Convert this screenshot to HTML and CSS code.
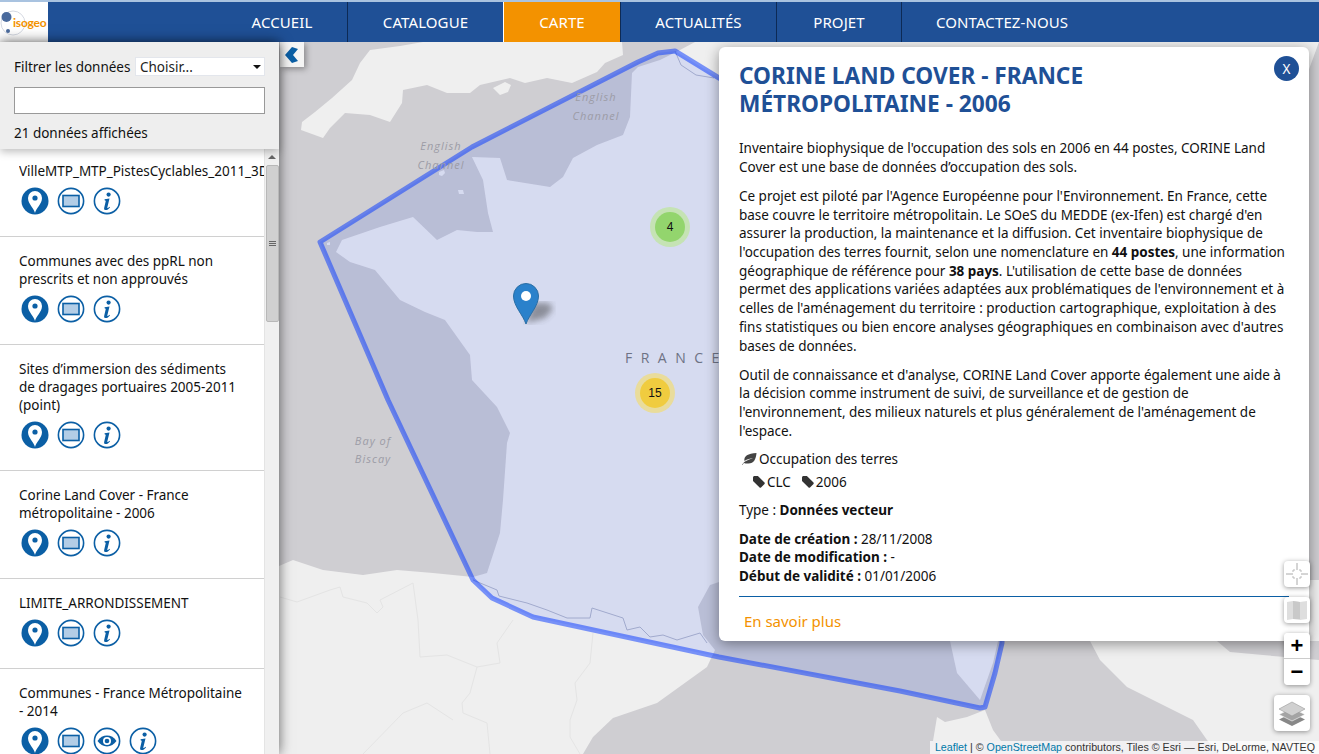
FILE: index.html
```html
<!DOCTYPE html>
<html lang="fr">
<head>
  <meta charset="UTF-8">
  <meta name="viewport" content="width=device-width, initial-scale=1.0">
  <title>Carte</title>
  <link rel="stylesheet" href="styles.css">
</head>
<body>
  <svg class="sprites" width="0" height="0">
    <symbol id="i-pin" viewBox="0 0 28 28">
      <circle cx="14" cy="14" r="13.5" fill="#0b5fa5"/>
      <path d="M14 26c-1-5-7-9-7-15a7 7 0 0 1 14 0c0 6-6 10-7 15z" fill="#fff"/>
      <circle cx="14" cy="11" r="2.6" fill="#0b5fa5"/>
    </symbol>
    <symbol id="i-rect" viewBox="0 0 28 28">
      <circle cx="14" cy="14" r="12.6" fill="#fff" stroke="#0b5fa5" stroke-width="1.6"/>
      <rect x="6" y="8.5" width="16" height="11" fill="#b3cde6" stroke="#0b5fa5" stroke-width="1.6"/>
    </symbol>
    <symbol id="i-info" viewBox="0 0 28 28">
      <circle cx="14" cy="14" r="12.6" fill="#fff" stroke="#0b5fa5" stroke-width="1.6"/>
      <circle cx="15.6" cy="7.6" r="2.1" fill="#0b5fa5"/>
      <path d="M11.5 12.2l5-.7-2.2 9c-.1.6.5.7 1 .3l1.2-1 .5.6c-1.400 1.700-2.700 2.600-4.300 2.600-1.300 0-1.900-.8-1.500-2.300l1.500-6.400c.1-.6-.2-.8-.9-.9z" fill="#0b5fa5"/>
    </symbol>
    <symbol id="i-eye" viewBox="0 0 28 28">
      <circle cx="14" cy="14" r="12.6" fill="#fff" stroke="#0b5fa5" stroke-width="1.6"/>
      <path d="M4.500 14c2.500-3.600 5.700-5.400 9.500-5.400s7 1.800 9.500 5.400c-2.500 3.600-5.700 5.400-9.500 5.400S7 17.600 4.500 14z" fill="#0b5fa5"/>
      <circle cx="14" cy="14" r="4" fill="#fff"/>
      <circle cx="14" cy="14" r="2.300" fill="#0b5fa5"/>
    </symbol>
    <symbol id="i-tag" viewBox="0 0 12 12">
      <path d="M0 1.500C0 .7.700 0 1.500 0h3.400l6.600 6.600c.4.400.4 1 0 1.400l-3.500 3.500c-.4.400-1 .4-1.400 0L0 5z" fill="#333"/>
    </symbol>
    <filter id="blur-shadow"><feGaussianBlur stdDeviation="3"/></filter>
  </svg>

  <header class="topbar">
    <a class="logo" href="#">
      <svg class="logo-mark" width="28" height="36" viewBox="0 0 28 36">
        <circle cx="13" cy="21" r="12" fill="none" stroke="#d5d9e2" stroke-width="1"/>
        <circle cx="6.500" cy="15" r="5" fill="#4a6a9c"/>
        <circle cx="8" cy="29" r="2" fill="#4a6a9c"/>
      </svg>
      <span class="logo-text">isogeo</span>
    </a>
    <nav class="nav">
      <a href="#">Accueil</a>
      <a href="#">Catalogue</a>
      <a class="active" href="#">Carte</a>
      <a href="#">Actualités</a>
      <a href="#">Projet</a>
      <a href="#">Contactez-nous</a>
    </nav>
  </header>

  <div class="main">
    <aside class="sidebar">
      <form class="filter">
        <div class="filter-row">
          <label for="filterType">Filtrer les données</label>
          <div class="select-wrap">
            <select id="filterType"><option>Choisir...</option></select>
          </div>
        </div>
        <input class="filter-input" type="text">
        <p class="filter-count">21 données affichées</p>
      </form>

      <div class="list-wrap">
        <ul class="list">
          <li class="item">
            <h4>VilleMTP_MTP_PistesCyclables_2011_3D</h4>
            <div class="item-icons">
              <svg class="ico"><use href="#i-pin"/></svg>
              <svg class="ico"><use href="#i-rect"/></svg>
              <svg class="ico"><use href="#i-info"/></svg>
            </div>
          </li>
          <li class="item">
            <h4>Communes avec des ppRL non prescrits et non approuvés</h4>
            <div class="item-icons">
              <svg class="ico"><use href="#i-pin"/></svg>
              <svg class="ico"><use href="#i-rect"/></svg>
              <svg class="ico"><use href="#i-info"/></svg>
            </div>
          </li>
          <li class="item">
            <h4>Sites d’immersion des sédiments de dragages portuaires 2005-2011 (point)</h4>
            <div class="item-icons">
              <svg class="ico"><use href="#i-pin"/></svg>
              <svg class="ico"><use href="#i-rect"/></svg>
              <svg class="ico"><use href="#i-info"/></svg>
            </div>
          </li>
          <li class="item">
            <h4>Corine Land Cover - France métropolitaine - 2006</h4>
            <div class="item-icons">
              <svg class="ico"><use href="#i-pin"/></svg>
              <svg class="ico"><use href="#i-rect"/></svg>
              <svg class="ico"><use href="#i-info"/></svg>
            </div>
          </li>
          <li class="item">
            <h4>LIMITE_ARRONDISSEMENT</h4>
            <div class="item-icons">
              <svg class="ico"><use href="#i-pin"/></svg>
              <svg class="ico"><use href="#i-rect"/></svg>
              <svg class="ico"><use href="#i-info"/></svg>
            </div>
          </li>
          <li class="item">
            <h4>Communes - France Métropolitaine - 2014</h4>
            <div class="item-icons">
              <svg class="ico"><use href="#i-pin"/></svg>
              <svg class="ico"><use href="#i-rect"/></svg>
              <svg class="ico"><use href="#i-eye"/></svg>
              <svg class="ico"><use href="#i-info"/></svg>
            </div>
          </li>
        </ul>
        <div class="scrollbar">
          <span class="scroll-up"></span>
          <span class="scroll-thumb"></span>
        </div>
      </div>
    </aside>

    <section class="map">
      <svg class="basemap" viewBox="279 42 1040 712" width="1040" height="712">
        <rect class="sea" x="279" y="42" width="1040" height="712"/>
        <!-- Angleterre -->
        <path class="land" d="M423 42L400 46 370 50 360 63 352 80 332 98 315 112 302 122 301 130 323 138 330 128 345 113 370 115 390 122 402 103 403 90 427 85 447 93 470 93 480 85 510 78 525 83 547 78 572 83 597 72 605 63 623 55 622 42z"/>
        <path class="land" d="M493 88l12-6 6 3-3 7-8 3z"/>
        <path class="land" d="M439 172l5-2 1 3-3 3-3-1zM458 190l5 0 1 4-5 0zM327 243l3-1 0 3-3 0z"/>
        <!-- France et continent -->
        <path class="land" d="M1319 42L695 42 680 50 660 60 638 67 632 73 630 117 623 135 597 145 573 158 563 177 550 187 507 180 500 158 472 157 483 180 488 213 493 232 477 232 457 230 437 240 413 217 380 227 342 240 336 252 350 262 375 270 400 300 425 312 445 320 470 355 472 380 497 407 510 433 507 443 503 500 500 533 487 573 473 577 433 573 397 570 363 575 323 570 293 560 279 566 279 754 583 754 593 737 613 718 657 703 707 667 715 650 703 635 698 607 710 585 725 580 1100 580 1319 580 1319 641 1100 641z"/>
        <!-- Corse -->
        <path class="land" d="M950 641l7 32 23 27 13-37 5-22z"/>
        <!-- Sardaigne -->
        <path class="land" d="M933 741l4-24 8 5 22-5 18-7 8 20 8 11z"/>
        <!-- Italie -->
        <path class="land" d="M1090 641l10 19 27 27 40 20 26 13 14 20 12 14h100V641z"/>
        <path class="sea" d="M1217 641l13 11 33 3 56 5v-19z"/>
        <!-- frontieres -->
        <path class="border" d="M473 580l24 10 2 6 28 7 20 7 20 8 23 0 2-10 31 10 4 12 13-3 10 10 13-2 14 5 23-7 7 10M675 51l6 14 15 10 18 3"/>
        <path class="border faint" d="M280 597l17 5 33-12 10-3 3 10 24 6 10 10 6-6-3-7 33-17 5 37 2 37 27-2 30 12 23-4-3-20 16-23M477 667l-7 26-8 10 1 10 24 10 3 31M593 633l-3 30-15 20 2 17-7 20 0 17 10 17M363 754l40-41 24-10 26 17"/>
        <polygon class="extent" points="320,242 472,147 638,62 658,53 675,51 719,78 900,180 1002,500 1002,643 995,673 985,707 980,708 900,691 719,657 533,617 492,598 473,580 388,400"/>
        <g class="labels">
          <text x="441" y="150">English</text>
          <text x="441" y="169">Channel</text>
          <text x="596" y="101">English</text>
          <text x="596" y="120">Channel</text>
          <text x="373" y="445">Bay of</text>
          <text x="373" y="463">Biscay</text>
        </g>
        <text class="country" x="625" y="363">FRANCE</text>
      </svg>

      <div class="cluster cluster-green"><span>4</span></div>
      <div class="cluster cluster-yellow"><span>15</span></div>
      <svg class="marker" width="50" height="42" viewBox="0 0 50 42">
        <path d="M13 40L20 20h16l4 6-8 9z" fill="#333" opacity=".45" filter="url(#blur-shadow)"/>
        <path d="M13 41C10 32 .5 23 .5 13a12.500 12.500 0 0 1 25 0C25.500 23 16 32 13 41z" fill="#2a81cb" stroke="#2a6ea5"/>
        <circle cx="13" cy="13" r="5" fill="#fff"/>
      </svg>

      <button class="collapse" type="button" aria-label="Replier">
        <svg width="14" height="16" viewBox="0 0 14 16"><path d="M7 0l6 2-5 6 5 6-6 2-7-8z" fill="#0b5fa5"/></svg>
      </button>

      <article class="panel">
        <button class="close" type="button">X</button>
        <h2>CORINE LAND COVER - FRANCE<br>MÉTROPOLITAINE - 2006</h2>
        <p>Inventaire biophysique de l'occupation des sols en 2006 en 44 postes, CORINE Land<br>Cover est une base de données d’occupation des sols.</p>
        <p>Ce projet est piloté par l'Agence Européenne pour l'Environnement. En France, cette<br>base couvre le territoire métropolitain. Le SOeS du MEDDE (ex-Ifen) est chargé d'en<br>assurer la production, la maintenance et la diffusion. Cet inventaire biophysique de<br>l'occupation des terres fournit, selon une nomenclature en <strong>44 postes</strong>, une information<br>géographique de référence pour <strong>38 pays</strong>. L'utilisation de cette base de données<br>permet des applications variées adaptées aux problématiques de l'environnement et à<br>celles de l'aménagement du territoire : production cartographique, exploitation à des<br>fins statistiques ou bien encore analyses géographiques en combinaison avec d'autres<br>bases de données.</p>
        <p>Outil de connaissance et d'analyse, CORINE Land Cover apporte également une aide à<br>la décision comme instrument de suivi, de surveillance et de gestion de<br>l'environnement, des milieux naturels et plus généralement de l'aménagement de<br>l'espace.</p>
        <div class="theme">
          <svg width="16" height="12" viewBox="0 0 16 12"><path d="M1 12C2 10 3 9 5 8 8 6.500 10 6 12 5 9.500 5.500 6 6 3.500 8 2.500 3 7 .5 15.500 0 15 6 13 11 6.500 10.500 5 10.500 4 10.500 3 10 2.500 10.500 2 11 1.500 12z" fill="#444"/></svg>
          <span>Occupation des terres</span>
        </div>
        <div class="tags">
          <span class="tag"><svg width="12" height="12"><use href="#i-tag"/></svg>CLC</span>
          <span class="tag"><svg width="12" height="12"><use href="#i-tag"/></svg>2006</span>
        </div>
        <p class="type">Type : <strong>Données vecteur</strong></p>
        <ul class="dates">
          <li><strong>Date de création :</strong> 28/11/2008</li>
          <li><strong>Date de modification :</strong> -</li>
          <li><strong>Début de validité :</strong> 01/01/2006</li>
        </ul>
        <a class="more" href="#">En savoir plus</a>
      </article>

      <div class="controls">
        <button class="ctl ctl-small" type="button" aria-label="Centrer">
          <svg width="24" height="24" viewBox="0 0 24 24"><path d="M12 1v7M12 16v7M1 12h7M16 12h7" stroke="#aaa" stroke-width="1" fill="none"/><path d="M8 8h2M8 8v2M16 8h-2M16 8v2M8 16h2M8 16v-2M16 16h-2M16 16v-2" stroke="#bbb" stroke-width="1" fill="none"/></svg>
        </button>
        <button class="ctl ctl-small" type="button" aria-label="Fond">
          <svg width="22" height="22" viewBox="0 0 22 22"><path d="M1 3l6-1 7 1 7-1v18l-7 1-7-1-6 1z" fill="#dedede"/><path d="M7 2v18h7V3z" fill="#c9c9c9"/></svg>
        </button>
        <div class="zoom">
          <button type="button">+</button>
          <button type="button">−</button>
        </div>
        <button class="ctl ctl-layers" type="button" aria-label="Couches">
          <svg width="28" height="26" viewBox="0 0 28 26"><path d="M14 13l13 6.500-13 6.500-13-6.500z" fill="#888"/><path d="M14 8l13 6.500L14 21 1 14.500z" fill="#a4a4a4" stroke="#fff" stroke-width=".6"/><path d="M14 2l13 7-13 7L1 9z" fill="#d0d0d0" stroke="#999" stroke-width=".6"/></svg>
        </button>
      </div>

      <div class="attribution"><a href="#">Leaflet</a> | © <a href="#">OpenStreetMap</a> contributors, Tiles © Esri — Esri, DeLorme, NAVTEQ</div>
    </section>
  </div>
</body>
</html>
```

FILE: styles.css
```css
* {
  box-sizing: border-box;
}
html, body {
  height: 100%;
}
body {
  margin: 0;
  display: flex;
  flex-direction: column;
  overflow: hidden;
  font-family: 'Noto Sans', 'Open Sans', sans-serif;
  font-size: 13.5px;
  letter-spacing: -0.02px;
  color: #111;
  background: #fff;
}
.sprites {
  position: absolute;
}

/* barre du haut */
.topbar {
  flex: none;
  display: flex;
  height: 42px;
  background: #1f5096;
  border-top: 2px solid #a9c3e0;
}
.logo {
  position: relative;
  display: block;
  flex: none;
  width: 48px;
  background: #fff;
  text-decoration: none;
}
.logo-mark {
  position: absolute;
  left: 0;
  top: 0;
}
.logo-text {
  position: absolute;
  left: 13px;
  top: 13px;
  font-family: 'Lato', sans-serif;
  font-size: 12px;
  font-weight: 700;
  letter-spacing: -0.2px;
  color: #f39200;
}
.nav {
  display: grid;
  grid-template-columns: 131px 156px 117px 156px 125px auto;
  margin-left: 169px;
}
.nav a {
  display: flex;
  align-items: center;
  justify-content: center;
  font-size: 15px;
  letter-spacing: 0.1px;
  color: #fff;
  text-decoration: none;
  text-transform: uppercase;
  border-right: 1px solid #0d2a55;
}
.nav a:last-child {
  padding: 0 34px;
  border-right: none;
}
.nav a.active {
  background: #f39200;
  box-shadow: -1px 0 0 #fff;
}

.main {
  flex: 1;
  display: flex;
  min-height: 0;
}

/* colonne de gauche */
.sidebar {
  position: relative;
  z-index: 5;
  flex: none;
  display: flex;
  flex-direction: column;
  width: 279px;
  background: #fff;
  box-shadow: 0 0 12px rgba(0, 0, 0, 0.6);
}
.filter {
  position: relative;
  z-index: 2;
  flex: none;
  height: 107px;
  padding: 15px 14px 0;
  background: #eee;
  box-shadow: 0 3px 8px rgba(0, 0, 0, 0.25);
}
.filter-row {
  display: flex;
  align-items: center;
  justify-content: space-between;
  height: 19px;
}
.filter-row label {
  padding-top: 1px;
}
.select-wrap {
  position: relative;
  width: 130px;
}
.select-wrap::after {
  content: "";
  position: absolute;
  right: 4px;
  top: 8px;
  border: 4px solid transparent;
  border-top: 4px solid #111;
  border-bottom: none;
}
.select-wrap select {
  display: block;
  width: 100%;
  height: 19px;
  padding: 0 4px;
  appearance: none;
  font: inherit;
  color: #222;
  background: #fff;
  border: 1px solid #e3e6ec;
}
.filter-input {
  display: block;
  width: 251px;
  height: 27px;
  margin-top: 11px;
  background: #fff;
  border: 1px solid #999;
}
.filter-count {
  margin: 10px 0 0;
}
.list-wrap {
  flex: 1;
  display: flex;
  min-height: 0;
}
.list {
  flex: 1;
  min-width: 0;
  margin: -2px 0 0;
  padding: 0;
  list-style: none;
  overflow: hidden;
}
.item {
  padding: 15px 0 21px 19px;
  border-bottom: 1px solid #d0d0d0;
}
.item h4 {
  margin: 0;
  padding-right: 20px;
  font-size: inherit;
  font-weight: normal;
  line-height: 18px;
}
.item:first-child h4 {
  padding-right: 0;
  white-space: nowrap;
  overflow: hidden;
}
.item-icons {
  display: flex;
  gap: 8px;
  margin-top: 7px;
  padding-left: 2px;
}
.ico {
  width: 28px;
  height: 28px;
}
.scrollbar {
  position: relative;
  flex: none;
  width: 15px;
  background: #f0f0f0;
  border-left: 1px solid #e4e4e4;
}
.scroll-up {
  position: absolute;
  left: 3px;
  top: 6px;
  border: 4px solid transparent;
  border-bottom: 4px solid #666;
  border-top: none;
}
.scroll-thumb {
  position: absolute;
  left: 1px;
  top: 16px;
  width: 13px;
  height: 157px;
  background: #d0d0d0;
  border: 1px solid #b8b8b8;
  border-radius: 2px;
}
.scroll-thumb::after {
  content: "";
  position: absolute;
  left: 2px;
  top: 75px;
  width: 7px;
  height: 5px;
  background: repeating-linear-gradient(#666 0 1px, transparent 1px 2px);
}

/* carte */
.map {
  position: relative;
  flex: 1;
  min-width: 0;
  overflow: hidden;
  background: #cfced2;
}
.basemap {
  position: absolute;
  left: 0;
  top: 0;
  display: block;
}
.sea {
  fill: #cfced2;
}
.land {
  fill: #efefef;
}
.border {
  fill: none;
  stroke: #b4b8c8;
  stroke-width: 1;
}
.border.faint {
  stroke: #e4e4e4;
}
.extent {
  fill: #0033ff;
  fill-opacity: 0.1;
  stroke: #0033ff;
  stroke-opacity: 0.5;
  stroke-width: 5;
  stroke-linejoin: round;
}
.labels text {
  font-family: 'Open Sans', sans-serif;
  font-size: 11px;
  font-style: italic;
  letter-spacing: 1px;
  text-anchor: middle;
  fill: #9c9ca6;
}
.country {
  font-family: 'Open Sans', sans-serif;
  font-size: 14px;
  letter-spacing: 8.5px;
  fill: #6e7284;
}
.cluster {
  position: absolute;
  display: flex;
  align-items: center;
  justify-content: center;
  width: 40px;
  height: 40px;
  padding: 5px;
  border-radius: 50%;
}
.cluster span {
  display: flex;
  align-items: center;
  justify-content: center;
  width: 100%;
  height: 100%;
  border-radius: 50%;
  font-family: 'Liberation Sans', sans-serif;
  font-size: 12px;
}
.cluster-green {
  left: 371px;
  top: 165px;
  background: #c5e3b4;
}
.cluster-green span {
  background: #93d56d;
}
.cluster-yellow {
  left: 356px;
  top: 331px;
  background: #e9dc9c;
}
.cluster-yellow span {
  background: #f0cc3f;
}
.marker {
  position: absolute;
  left: 234px;
  top: 241px;
}
.collapse {
  position: absolute;
  left: 1px;
  top: 0;
  display: flex;
  align-items: center;
  justify-content: center;
  width: 24px;
  height: 25px;
  padding: 0;
  background: #f5f5f5;
  border: none;
  box-shadow: 2px 2px 6px rgba(0, 0, 0, 0.35);
}

/* fiche */
.panel {
  position: absolute;
  left: 440px;
  top: 5px;
  width: 590px;
  height: 594px;
  padding: 15px 20px 0;
  background: #fff;
  border-radius: 6px;
  box-shadow: 0 3px 14px rgba(0, 0, 0, 0.4);
}
.panel h2 {
  margin: 0 0 21px;
  font-size: 22.7px;
  font-weight: 700;
  letter-spacing: 0;
  line-height: 28px;
  color: #1f5096;
}
.panel p {
  margin: 0 0 10.5px;
  line-height: 18.700px;
}
.close {
  position: absolute;
  right: 10px;
  top: 9px;
  width: 25px;
  height: 25px;
  padding: 0;
  font: inherit;
  color: #fff;
  background: #1f5096;
  border: none;
  border-radius: 50%;
}
.theme {
  display: flex;
  align-items: center;
  gap: 2px;
  height: 19px;
  margin-top: -2px;
  padding-left: 2px;
}
.tags {
  display: flex;
  gap: 11px;
  margin-top: 4px;
  padding-left: 14px;
  height: 19px;
  align-items: center;
}
.tag {
  display: flex;
  align-items: center;
  gap: 2px;
}
.panel .type {
  margin: 10px 0 10px;
}
.dates {
  margin: 0;
  padding: 0 0 10px;
  list-style: none;
  line-height: 18.700px;
  border-bottom: 1px solid #0b5fa5;
}
.more {
  display: block;
  margin-top: 14px;
  padding-left: 5px;
  font-size: 15px;
  color: #f39200;
  text-decoration: none;
}

/* boutons carte */
.controls {
  position: absolute;
  right: 9px;
  bottom: 23px;
  display: flex;
  flex-direction: column;
  align-items: flex-end;
  gap: 10px;
}
.ctl {
  display: flex;
  align-items: center;
  justify-content: center;
  padding: 0;
  background: #fff;
  border: none;
  border-radius: 4px;
  box-shadow: 0 1px 5px rgba(0, 0, 0, 0.4);
}
.ctl-small {
  width: 26px;
  height: 26px;
}
.ctl-layers {
  width: 36px;
  height: 36px;
}
.zoom {
  width: 26px;
  border-radius: 4px;
  overflow: hidden;
  box-shadow: 0 1px 5px rgba(0, 0, 0, 0.4);
}
.zoom button {
  display: block;
  width: 26px;
  height: 26px;
  padding: 0;
  font-family: 'Liberation Sans', sans-serif;
  font-size: 22px;
  font-weight: 700;
  line-height: 24px;
  color: #000;
  background: #fff;
  border: none;
}
.zoom button:first-child {
  border-bottom: 1px solid #ccc;
}
.attribution {
  position: absolute;
  right: 0;
  bottom: 0;
  height: 13px;
  padding: 0 4px 0 5px;
  font-family: 'Liberation Sans', sans-serif;
  font-size: 10.7px;
  letter-spacing: 0;
  line-height: 13px;
  color: #333;
  background: rgba(255, 255, 255, 0.7);
}
.attribution a {
  color: #0078a8;
  text-decoration: none;
}
```
